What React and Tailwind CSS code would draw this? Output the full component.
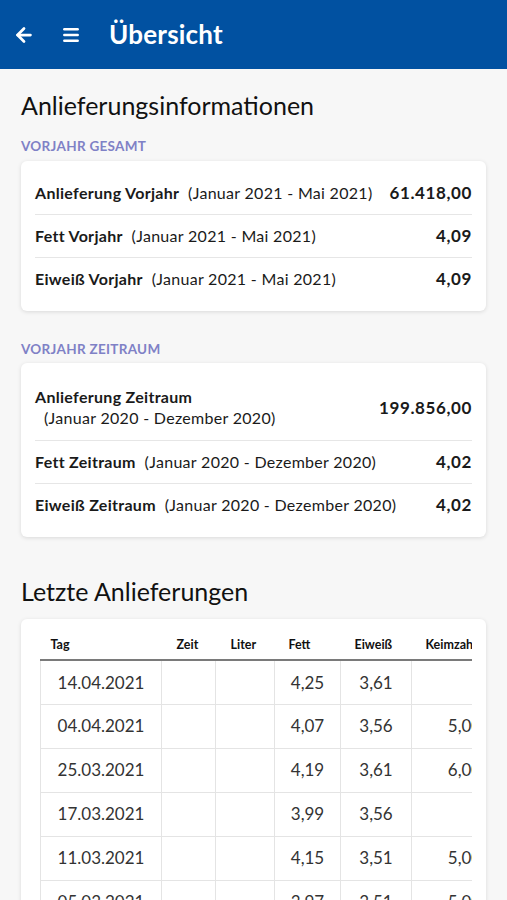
import { ArrowLeft, Menu } from "lucide-react"

const gesamt = [
  { label: "Anlieferung Vorjahr", range: "(Januar 2021 - Mai 2021)", value: "61.418,00" },
  { label: "Fett Vorjahr", range: "(Januar 2021 - Mai 2021)", value: "4,09" },
  { label: "Eiweiß Vorjahr", range: "(Januar 2021 - Mai 2021)", value: "4,09" },
]

const zeitraum = [
  { label: "Fett Zeitraum", range: "(Januar 2020 - Dezember 2020)", value: "4,02" },
  { label: "Eiweiß Zeitraum", range: "(Januar 2020 - Dezember 2020)", value: "4,02" },
]

const rows = [
  ["14.04.2021", "", "", "4,25", "3,61", ""],
  ["04.04.2021", "", "", "4,07", "3,56", "5,00"],
  ["25.03.2021", "", "", "4,19", "3,61", "6,00"],
  ["17.03.2021", "", "", "3,99", "3,56", ""],
  ["11.03.2021", "", "", "4,15", "3,51", "5,00"],
  ["05.03.2021", "", "", "3,97", "3,51", "5,00"],
]

const cols = [
  { name: "Tag", w: "w-[121px]", pl: "pl-[10px]" },
  { name: "Zeit", w: "w-[54px]", pl: "pl-[15px]" },
  { name: "Liter", w: "w-[59px]", pl: "pl-[15px]" },
  { name: "Fett", w: "w-[66px]", pl: "pl-[14px]" },
  { name: "Eiweiß", w: "w-[71px]", pl: "pl-[14px]" },
  { name: "Keimzahl", w: "w-[106px]", pl: "pl-[14px]" },
]

function InfoRow({ label, range, value }) {
  return (
    <div className="flex items-center justify-between py-[11px] leading-[20px] text-[16px] text-[#1a1a1a] border-b border-[#e6e6e6] last:border-b-0">
      <p className="tracking-[0.3px]">
        <span className="font-bold">{label}</span>
        <span>&nbsp; {range}</span>
      </p>
      <span className="font-bold text-[17px] tracking-[0.6px]">{value}</span>
    </div>
  )
}

export default function App() {
  return (
    <div className="min-h-[900px] bg-[#f7f7f7] font-['Lato',sans-serif]">
      {/* Top bar */}
      <div className="h-[69px] bg-[#0151a1] flex items-center text-white">
        <ArrowLeft className="ml-[13px] w-[22px] h-[22px]" strokeWidth={3} />
        <Menu className="ml-[26px] w-[20px] h-[20px]" strokeWidth={3} />
        <h1 className="ml-[28px] text-[26px] font-bold tracking-[0.2px]">Übersicht</h1>
      </div>

      <div className="px-[21px]">
        <h2 className="pt-[20px] text-[25px] leading-[32px] text-[#111]">Anlieferungsinformationen</h2>

        <p className="mt-[17px] text-[13.5px] leading-[16px] font-bold text-[#7f81c6] tracking-[0.3px]">VORJAHR GESAMT</p>
        <div className="mt-[7px] bg-white rounded-md shadow-[0_1px_4px_rgba(0,0,0,0.12)] px-[14px] py-[11px]">
          {gesamt.map((r, i) => (
            <InfoRow key={i} {...r} />
          ))}
        </div>

        <p className="mt-[30px] text-[13.5px] leading-[16px] font-bold text-[#7f81c6] tracking-[0.3px]">VORJAHR ZEITRAUM</p>
        <div className="mt-[6px] bg-white rounded-md shadow-[0_1px_4px_rgba(0,0,0,0.12)] px-[14px] py-[11px]">
          <div className="flex items-center justify-between py-[12px] text-[16px] leading-[21px] text-[#1a1a1a] border-b border-[#e6e6e6]">
            <div className="tracking-[0.3px]">
              <p className="font-bold">Anlieferung Zeitraum</p>
              <p className="pl-[9px]">(Januar 2020 - Dezember 2020)</p>
            </div>
            <span className="font-bold text-[17px] tracking-[0.6px]">199.856,00</span>
          </div>
          {zeitraum.map((r, i) => (
            <InfoRow key={i} {...r} />
          ))}
        </div>

        <h2 className="mt-[38px] text-[25px] leading-[32px] text-[#111]">Letzte Anlieferungen</h2>

        {/* Table card */}
        <div className="mt-[12px] bg-white rounded-t-md shadow-[0_1px_4px_rgba(0,0,0,0.12)] pl-[19px] pr-[14px] pt-[12px] pb-[20px]">
          <div className="overflow-hidden">
            <table className="border-collapse text-[#333] table-fixed w-[477px]">
              <thead>
                <tr className="border-b-2 border-[#7a7a7a]">
                  {cols.map(c => (
                    <th key={c.name} className={`${c.w} ${c.pl} h-[29px] text-left text-[12.5px] font-bold text-[#111] whitespace-nowrap`}>
                      {c.name}
                    </th>
                  ))}
                </tr>
              </thead>
              <tbody>
                {rows.map((r, i) => (
                  <tr key={i}>
                    {r.map((cell, j) => (
                      <td key={j} className="h-[44px] border border-[#e4e4e4] text-center text-[17px] text-[#333]">
                        {cell}
                      </td>
                    ))}
                  </tr>
                ))}
              </tbody>
            </table>
          </div>
        </div>
      </div>
    </div>
  )
}
